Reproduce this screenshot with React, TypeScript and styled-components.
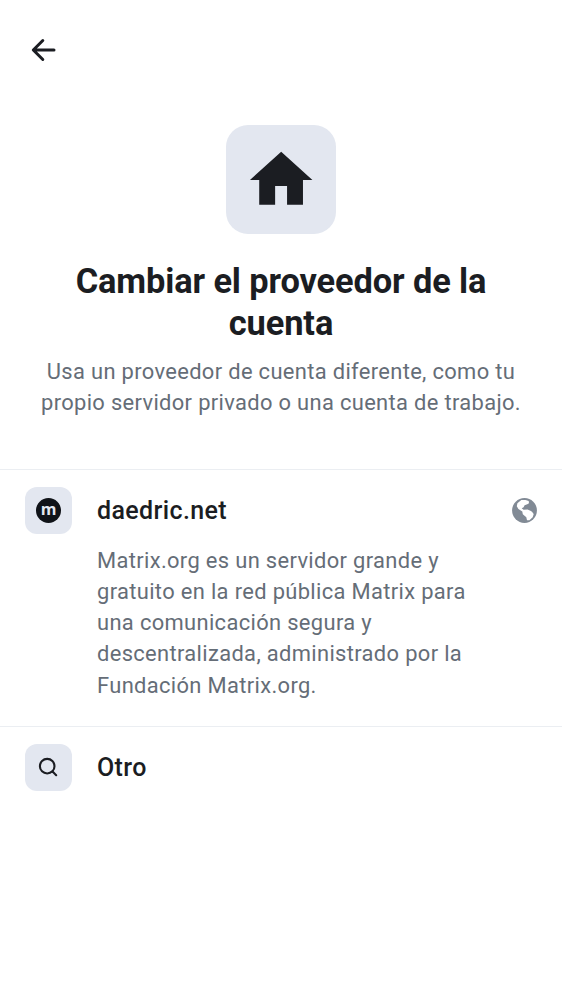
import React from 'react';
import styled, { createGlobalStyle } from 'styled-components';

const GlobalStyle = createGlobalStyle`
  * { box-sizing: border-box; }
  body { margin: 0; background: #fff; font-family: Roboto, sans-serif; color: #1b1d22; }
`;
const Screen = styled.main`
  display: flex;
  flex-direction: column;
  min-height: 1000px;
  background: #fff;
`;
const TopBar = styled.header`
  display: flex;
  align-items: center;
  height: 100px;
  padding-left: 25px;
`;
const IconButton = styled.button`
  display: flex;
  align-items: center;
  justify-content: center;
  width: 37px;
  height: 37px;
  padding: 0;
  border: 0;
  background: none;
  color: #1b1d22;
`;
const Hero = styled.section`
  display: flex;
  flex-direction: column;
  align-items: center;
  height: 369px;
  padding-top: 25px;
  text-align: center;
`;
const HeroTile = styled.div`
  display: flex;
  width: 109.4px;
  height: 109.4px;
  border-radius: 22px;
  background: #e3e7f0;
`;
const Title = styled.h1`
  margin: 25.4px 0 0;
  font-size: 34.4px;
  line-height: 42.2px;
  font-weight: 700;
  letter-spacing: -0.12px;
`;
const Subtitle = styled.p`
  margin: 11.8px 0 0;
  font-size: 21.9px;
  line-height: 31.2px;
  letter-spacing: 0.34px;
  color: #656d77;
`;
const Item = styled.section`
  border-top: 1px solid #ebeef2;
  padding: 17px 25px 0;
`;
const ItemHead = styled.div`
  display: flex;
  align-items: center;
  height: 47px;
`;
const ItemTile = styled.div`
  display: flex;
  align-items: center;
  justify-content: center;
  width: 47px;
  height: 47px;
  margin-right: 25px;
  border-radius: 12px;
  background: #e3e7f0;
`;
const Name = styled.h2`
  flex: 1;
  margin: 0;
  font-size: 25px;
  font-weight: 500;
  letter-spacing: 0.38px;
`;
const Description = styled.p`
  margin: 10.8px 0 25.2px 72px;
  font-size: 21.9px;
  line-height: 31.2px;
  letter-spacing: 0.35px;
  color: #656d77;
`;

export default function App() {
  return (
    <>
      <GlobalStyle />
      <Screen>
        <TopBar>
          <IconButton aria-label="Atrás">
            <svg width="37" height="37" viewBox="0 0 37 37" fill="none" stroke="currentColor" strokeWidth="3" strokeLinecap="round" strokeLinejoin="round">
              <path d="M29 18H9M17.8 8.5L8.3 18L17.8 27.5" />
            </svg>
          </IconButton>
        </TopBar>
        <Hero>
          <HeroTile>
            <svg width="110" height="110" viewBox="0 0 110 110" fill="#1b1d22">
              <path d="M48.9 79.8V61H60.9V79.8H76.9V55H86.4L55 26.5L23.6 55H32.9V79.8Z" transform="translate(.5 0)" />
            </svg>
          </HeroTile>
          <Title>Cambiar el proveedor de la<br />cuenta</Title>
          <Subtitle>Usa un proveedor de cuenta diferente, como tu<br />propio servidor privado o una cuenta de trabajo.</Subtitle>
        </Hero>
        <Item>
          <ItemHead>
            <ItemTile>
              <svg width="27" height="27" viewBox="0 0 27 27">
                <circle cx="13.5" cy="13.5" r="12.5" fill="#101318" />
                <text x="13.5" y="17.6" textAnchor="middle" fill="#e3e7f0" fontFamily="'Open Sans', sans-serif" fontWeight="700" fontSize="16">m</text>
              </svg>
            </ItemTile>
            <Name>daedric.net</Name>
            <svg width="25" height="25" viewBox="0 0 25 25">
              <circle cx="12.5" cy="12.5" r="12.4" fill="#818a95" />
              <path fill="#fff" d="M4.8 8.2L5.4 5.2L9.3 2L13.5 1.9L16.7 3L17 5.2L15.3 6.2L12.6 7.2L11.6 9.3L9.7 10.2L11.5 11.8L15.5 11.6L18.4 12.8L20 13.7L21.7 16L20.7 19.3L17.4 22.2L15 22.3L14.3 19.2L10.8 16.2L10.3 13.6L6.4 11Z" />
            </svg>
          </ItemHead>
          <Description>Matrix.org es un servidor grande y<br />gratuito en la red pública Matrix para<br />una comunicación segura y<br />descentralizada, administrado por la<br />Fundación Matrix.org.</Description>
        </Item>
        <Item>
          <ItemHead>
            <ItemTile>
              <svg width="25" height="25" viewBox="0 0 25 25" fill="none" stroke="#1b1d22" strokeWidth="2.1" strokeLinecap="round">
                <circle cx="11.2" cy="11.2" r="7.3" /><path d="M16.5 16.5L20.2 20.2" />
              </svg>
            </ItemTile>
            <Name>Otro</Name>
          </ItemHead>
        </Item>
      </Screen>
    </>
  );
}
